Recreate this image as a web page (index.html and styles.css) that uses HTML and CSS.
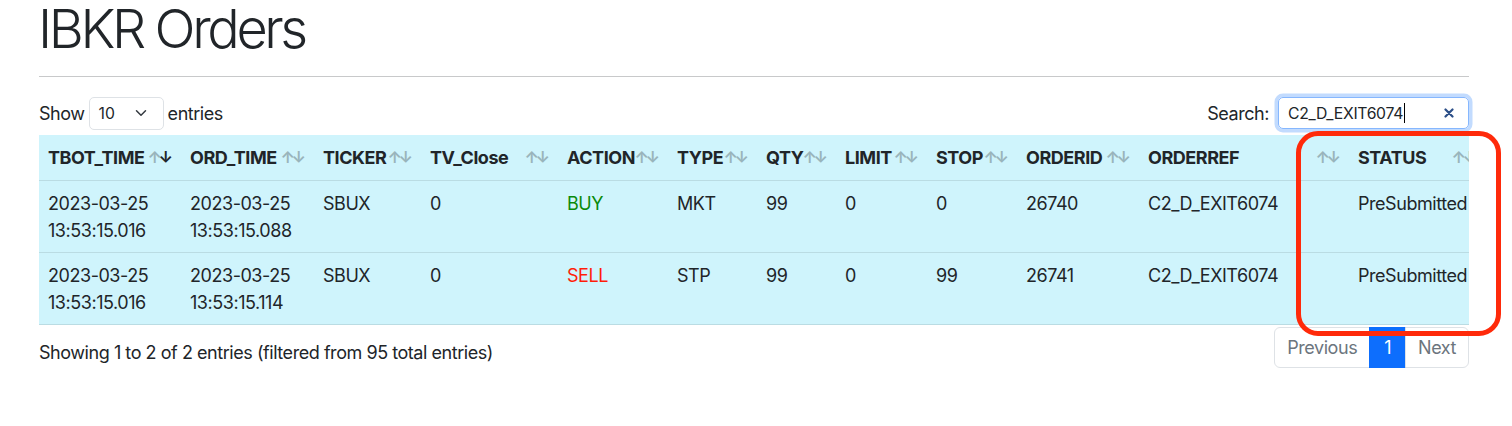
FILE: index.html
```html
<!DOCTYPE html>
<html lang="en">
<head>
<meta charset="utf-8">
<title>IBKR Orders</title>
<link rel="stylesheet" href="styles.css">
</head>
<body>
<div class="page">
  <div class="container">
    <h1 class="title">IBKR Orders</h1>
    <hr class="rule">
    <div class="dt-top">
      <label class="length">Show
        <span class="select"><span>10</span>
          <svg class="chev" viewBox="0 0 16 16" width="12" height="12"><path d="M2 5l6 6 6-6" fill="none" stroke="#343a40" stroke-width="2" stroke-linecap="round" stroke-linejoin="round"/></svg>
        </span>
        entries</label>
      <label class="search">Search:
        <span class="search-input"><span class="val">C2_D_EXIT6074</span><span class="caret"></span>
          <svg class="clear" viewBox="0 0 10 10" width="10" height="10"><path d="M1.5 1.5l7 7M8.5 1.5l-7 7" stroke="#2c4f88" stroke-width="2.2" stroke-linecap="round"/></svg>
        </span>
      </label>
    </div>
    <div class="scroll">
      <table class="orders">
        <colgroup>
          <col class="c1"><col class="c2"><col class="c3"><col class="c4"><col class="c5"><col class="c6"><col class="c7"><col class="c8"><col class="c9"><col class="c10"><col class="c11"><col class="c12">
        </colgroup>
        <thead>
          <tr>
            <th class="sort desc">TBOT_TIME</th>
            <th class="sort">ORD_TIME</th>
            <th class="sort">TICKER</th>
            <th class="sort">TV_Close</th>
            <th class="sort">ACTION</th>
            <th class="sort">TYPE</th>
            <th class="sort">QTY</th>
            <th class="sort">LIMIT</th>
            <th class="sort">STOP</th>
            <th class="sort">ORDERID</th>
            <th class="sort">ORDERREF</th>
            <th class="sort">STATUS</th>
          </tr>
        </thead>
        <tbody>
          <tr>
            <td>2023-03-25 13:53:15.016</td>
            <td>2023-03-25 13:53:15.088</td>
            <td>SBUX</td>
            <td>0</td>
            <td class="buy">BUY</td>
            <td>MKT</td>
            <td>99</td>
            <td>0</td>
            <td>0</td>
            <td>26740</td>
            <td>C2_D_EXIT6074</td>
            <td>PreSubmitted</td>
          </tr>
          <tr>
            <td>2023-03-25 13:53:15.016</td>
            <td>2023-03-25 13:53:15.114</td>
            <td>SBUX</td>
            <td>0</td>
            <td class="sell">SELL</td>
            <td>STP</td>
            <td>99</td>
            <td>0</td>
            <td>99</td>
            <td>26741</td>
            <td>C2_D_EXIT6074</td>
            <td>PreSubmitted</td>
          </tr>
        </tbody>
      </table>
    </div>
    <div class="dt-bottom">
      <div class="info">Showing 1 to 2 of 2 entries (filtered from 95 total entries)</div>
      <ul class="pagination">
        <li class="page-item disabled"><span class="page-link">Previous</span></li>
        <li class="page-item active"><span class="page-link">1</span></li>
        <li class="page-item disabled"><span class="page-link">Next</span></li>
      </ul>
    </div>
  </div>
  <div class="annot"></div>
</div>
</body>
</html>
```

FILE: styles.css
```css
* { box-sizing: border-box; }

body {
  margin: 0;
  font-family: Inter, "Liberation Sans", "DejaVu Sans", sans-serif;
  font-size: 18px;
  line-height: 27px;
  letter-spacing: -0.45px;
  color: #212529;
  background: #fff;
}

.page {
  position: relative;
  width: 1512px;
  height: 426px;
  overflow: hidden;
}

.container {
  margin-left: 39px;
  width: 1430px;
}

.title {
  margin: 0 0 0 -1px;
  font-size: 54px;
  font-weight: 300;
  line-height: 57px;
  letter-spacing: -3.4px;
}

.rule {
  margin: 19px 0 0;
  border: 0;
  border-top: 1px solid #c8c9ca;
  height: 0;
}

.dt-top {
  display: flex;
  justify-content: space-between;
  align-items: center;
  margin-top: 19px;
  height: 34px;
}

.length, .search {
  display: flex;
  align-items: center;
  gap: 4px;
}

.select {
  display: inline-flex;
  align-items: center;
  justify-content: space-between;
  width: 75px;
  height: 33px;
  padding: 0 16px 0 9px;
  border: 1px solid #dee2e6;
  border-radius: 5px;
  font-size: 15.75px;
  letter-spacing: 0;
}

.chev { display: block; }

.search { gap: 9px; }

.search-input {
  position: relative;
  display: inline-flex;
  align-items: center;
  width: 191px;
  height: 32px;
  padding: 0 9px;
  border: 1px solid #86b7fe;
  border-radius: 5px;
  box-shadow: 0 0 0 3.5px rgba(13, 110, 253, 0.25);
  font-size: 15.75px;
  letter-spacing: -0.3px;
}

.caret {
  display: inline-block;
  width: 1px;
  height: 20px;
  margin-left: 1px;
  background: #000;
}

.clear {
  margin-left: auto;
  margin-right: 5px;
}

.scroll {
  margin-top: 5px;
  width: 1430px;
  overflow: hidden;
}

.orders {
  width: 1446px;
  table-layout: fixed;
  border-collapse: collapse;
  background: #cff4fc;
}

.c1 { width: 142px; }
.c2 { width: 133px; }
.c3 { width: 107px; }
.c4 { width: 137px; }
.c5 { width: 110px; }
.c6 { width: 89px; }
.c7 { width: 79px; }
.c8 { width: 91px; }
.c9 { width: 90px; }
.c10 { width: 122px; }
.c11 { width: 210px; }
.c12 { width: 136px; }

.orders th, .orders td {
  text-align: left;
  vertical-align: top;
  border-bottom: 1px solid #badce3;
  padding: 9px 9px;
}

.orders td { padding-bottom: 8px; }

.orders th {
  position: relative;
  font-weight: 700;
  padding-right: 30px;
  white-space: nowrap;
}

.orders th.sort::before,
.orders th.sort::after {
  position: absolute;
  bottom: 9px;
  opacity: 0.3;
  font-weight: 700;
  font-size: 16px;
  letter-spacing: 0;
}

.orders th.sort::before {
  content: "\2191";
  right: 19px;
}

.orders th.sort::after {
  content: "\2193";
  right: 8px;
}

.orders th.desc::after { opacity: 1; }

.buy { color: #0a8a0a; }
.sell { color: #ff1e0a; }

.dt-bottom {
  display: flex;
  justify-content: space-between;
  align-items: flex-start;
  margin-top: 2px;
}

.info { padding-top: 12px; }

.pagination {
  display: flex;
  list-style: none;
  margin: 0;
  padding: 0;
}

.page-link {
  display: block;
  padding: 6px 12px;
  border: 1px solid #dee2e6;
  margin-left: -1px;
  color: #6c757d;
  background: #fff;
}

.page-item:first-child .page-link {
  margin-left: 0;
  border-radius: 6px 0 0 6px;
}

.page-item:last-child .page-link {
  border-radius: 0 6px 6px 0;
}

.page-item.active .page-link {
  padding: 6px 14px;
  background: #0d6efd;
  border-color: #0d6efd;
  color: #fff;
}

.annot {
  position: absolute;
  left: 1296px;
  top: 131px;
  width: 205px;
  height: 205px;
  border: 5px solid #ff2a0a;
  border-radius: 22px;
}
```
